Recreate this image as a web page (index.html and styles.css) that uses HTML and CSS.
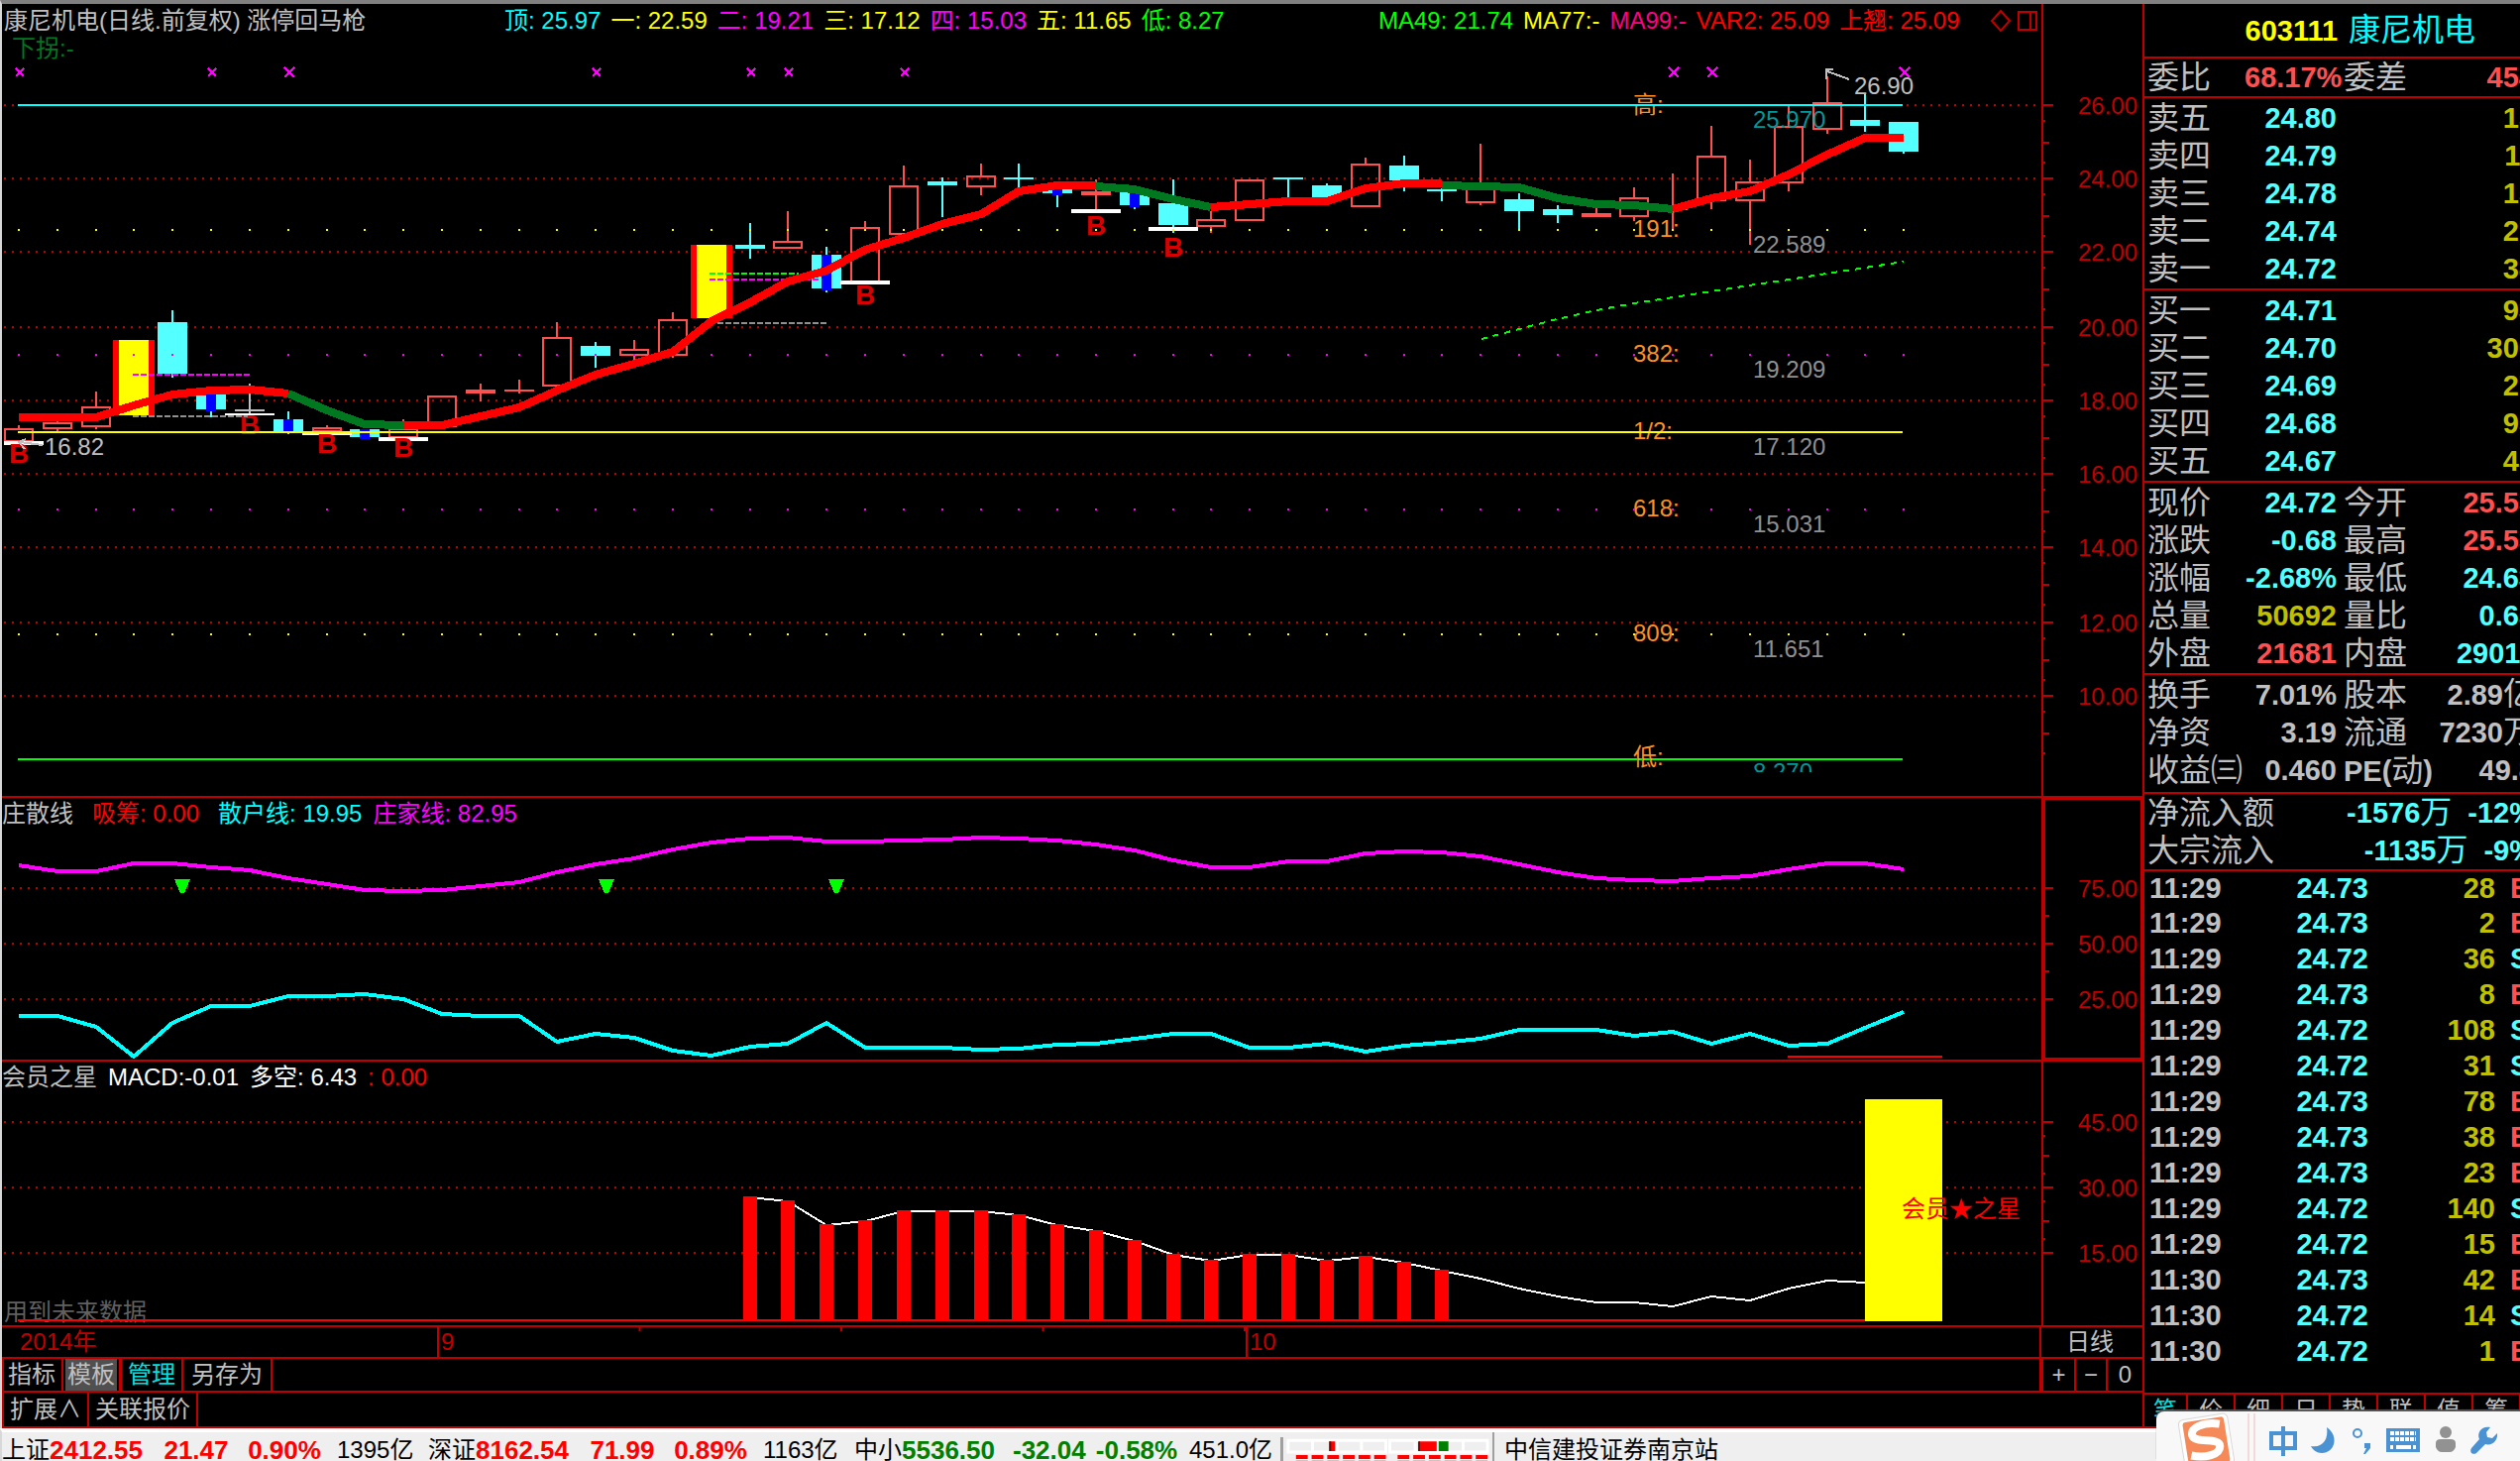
FILE: index.html
```html
<!DOCTYPE html>
<html lang="zh-CN">
<head>
<meta charset="utf-8">
<title>康尼机电 603111</title>
<link rel="stylesheet" href="styles.css">
</head>
<body>
<div class="app">
  <div class="workspace">
    <main class="charts">
      <section class="panel">
        <svg id="price" class="plot" viewBox="2 4 2160 799" preserveAspectRatio="xMinYMin meet"></svg>
        <header class="legend legend-main">
          <span>康尼机电(日线.前复权) 涨停回马枪</span>
          <div class="legend-group">
            <span class="aqua">顶: 25.97</span><span class="yellow">一: 22.59</span><span class="magenta">二: 19.21</span><span class="yellow">三: 17.12</span><span class="magenta">四: 15.03</span><span class="yellow">五: 11.65</span><span class="lime">低: 8.27</span>
          </div>
          <div class="legend-group">
            <span class="lime">MA49: 21.74</span><span class="yellow">MA77:-</span><span class="rose">MA99:-</span><span class="red">VAR2: 25.09</span><span class="red">上翘: 25.09</span>
          </div>
          <svg class="legend-icons" width="48" height="24" viewBox="0 0 48 24"><path d="M11 1 20 11 11 21 2 11ZM29 2H47V20H29ZM41 2V20" fill="none" stroke="#c00000" stroke-width="2"/></svg>
          <span class="turn">下拐:-</span>
        </header>
      </section>
      <section class="panel">
        <svg id="holders" class="plot" viewBox="2 805 2160 264" preserveAspectRatio="xMinYMin meet"></svg>
        <header class="legend legend-sub">
          <span class="wide-gap">庄散线</span><span class="red wide-gap">吸筹: 0.00</span><span class="aqua">散户线: 19.95</span><span class="magenta">庄家线: 82.95</span>
        </header>
      </section>
      <section class="panel">
        <svg id="star" class="plot" viewBox="2 1071 2160 266" preserveAspectRatio="xMinYMin meet"></svg>
        <header class="legend legend-sub">
          <span>会员之星</span><span class="white">MACD:-0.01</span><span class="white">多空: 6.43</span><span class="red">: 0.00</span>
        </header>
      </section>
      <div class="dates">
        <span class="date first">2014年</span><span class="date weeks">9</span><span class="date">10</span><span class="period">日线</span>
      </div>
      <nav class="tabs">
        <button>指标</button><button class="active">模板</button><button class="accent">管理</button><button class="roomy">另存为</button>
        <div class="zoom"><button>+</button><button>−</button><button>0</button></div>
      </nav>
      <nav class="tabs tabs-last">
        <button>扩展∧</button><button>关联报价</button>
      </nav>
    </main>

    <aside class="quote">
      <div class="quote-inner">
        <h1><span class="code">603111</span> 康尼机电</h1>
        <table class="block tight">
          <colgroup><col class="c1"><col class="c2"><col class="c3"><col></colgroup>
          <tr><th>委比</th><td class="up">68.17%</td><th>委差</th><td class="up">454</td></tr>
        </table>
        <table class="block">
          <colgroup><col class="c1"><col class="c2"><col></colgroup>
          <tr><th>卖五</th><td class="down">24.80</td><td class="vol">15</td></tr>
          <tr><th>卖四</th><td class="down">24.79</td><td class="vol">11</td></tr>
          <tr><th>卖三</th><td class="down">24.78</td><td class="vol">15</td></tr>
          <tr><th>卖二</th><td class="down">24.74</td><td class="vol">27</td></tr>
          <tr><th>卖一</th><td class="down">24.72</td><td class="vol">38</td></tr>
        </table>
        <table class="block">
          <colgroup><col class="c1"><col class="c2"><col></colgroup>
          <tr><th>买一</th><td class="down">24.71</td><td class="vol">93</td></tr>
          <tr><th>买二</th><td class="down">24.70</td><td class="vol">300</td></tr>
          <tr><th>买三</th><td class="down">24.69</td><td class="vol">27</td></tr>
          <tr><th>买四</th><td class="down">24.68</td><td class="vol">95</td></tr>
          <tr><th>买五</th><td class="down">24.67</td><td class="vol">45</td></tr>
        </table>
        <table class="block">
          <colgroup><col class="c1"><col class="c2"><col class="c3"><col></colgroup>
          <tr><th>现价</th><td class="down">24.72</td><th>今开</th><td class="up">25.53</td></tr>
          <tr><th>涨跌</th><td class="down">-0.68</td><th>最高</th><td class="up">25.53</td></tr>
          <tr><th>涨幅</th><td class="down">-2.68%</td><th>最低</th><td class="down">24.63</td></tr>
          <tr><th>总量</th><td class="vol">50692</td><th>量比</th><td class="down">0.65</td></tr>
          <tr><th>外盘</th><td class="up">21681</td><th>内盘</th><td class="down">29011</td></tr>
        </table>
        <table class="block loose">
          <colgroup><col class="c1"><col class="c2"><col class="c3"><col></colgroup>
          <tr><th>换手</th><td>7.01%</td><th>股本</th><td>2.89<span class="unit">亿</span></td></tr>
          <tr><th>净资</th><td>3.19</td><th>流通</th><td>7230<span class="unit">万</span></td></tr>
          <tr><th>收益㈢</th><td>0.460</td><th><span class="num">PE(</span>动<span class="num">)</span></th><td>49.8</td></tr>
        </table>
        <table class="block tight flow">
          <tr><th>净流入额</th><td class="down">-1576<span class="unit">万</span><span class="share">-12%</span></td></tr>
          <tr><th>大宗流入</th><td class="down">-1135<span class="unit">万</span><span class="share">-9%</span></td></tr>
        </table>
        <table class="trades" id="trades"></table>
        <nav class="side-tabs">
          <button class="accent">笔</button><button>价</button><button>细</button><button>日</button><button>势</button><button>联</button><button>值</button><button>筹</button>
        </nav>
      </div>
    </aside>
  </div>

  <footer class="status">
    <div class="index"><span>上证</span><b>2412.55</b><b>21.47</b><b>0.90%</b><span>1395亿</span></div>
    <div class="index"><span>深证</span><b>8162.54</b><b>71.99</b><b>0.89%</b><span>1163亿</span></div>
    <div class="index fall"><span>中小</span><b>5536.50</b><b>-32.04</b><b>-0.58%</b><span>451.0亿</span></div>
    <svg class="meter" width="214" height="24" viewBox="0 0 214 24">
      <path d="M5 1H105V13H5ZM109 1H209V13H109ZM30 1V13M55 1V13M80 1V13M135 1V13M160 1V13M184 1V13" fill="none" stroke="#fff" stroke-width="3"/>
      <path fill="#f00" d="M47 2h6v10h-6zM139 2h18v10h-18z"/><path fill="#800000" d="M47 2h2v10h-2zM138 2h2v10h-2z"/><path fill="#008000" d="M159 2h10v10h-10z"/>
      <path d="M13 18H105M13 24H105M117 18H209M117 24H209" stroke="#f00" stroke-width="4" stroke-dasharray="12 4"/>
    </svg>
    <span class="station">中信建投证券南京站</span>
  </footer>

  <div class="ime">
    <svg width="367" height="50" viewBox="2176 1424 367 50">
      <g transform="rotate(-9 2226 1452)">
        <rect x="2201" y="1429" width="50" height="52" rx="5" fill="#fff" stroke="#d8d8d8"/>
        <rect x="2205" y="1432" width="42" height="46" rx="3" fill="#f58a58"/>
        <path d="M2242 1439C2226 1434 2212 1438 2213 1446C2214 1455 2240 1452 2239 1461C2238 1470 2222 1471 2209 1466" fill="none" stroke="#fff" stroke-width="8"/>
      </g>
      <path d="M2269 1426V1474M2275 1426V1474" stroke="#f3d9dc" stroke-width="2"/>
      <g fill="none" stroke="#4b92d3" stroke-width="4"><path d="M2292 1446H2316V1461H2292ZM2304 1439V1469"/><circle cx="2379" cy="1446" r="4" stroke-width="2"/></g>
      <path d="M2348 1440C2361 1449 2356 1466 2343 1466C2338 1466 2334 1463 2332 1459C2344 1461 2350 1452 2348 1440Z" fill="#4b92d3"/>
      <path d="M2386 1456H2392V1461L2387 1467H2385L2388 1461H2386Z" fill="#4b92d3"/>
      <path d="M2408 1441H2442V1465H2408Z" fill="#4b92d3"/>
      <path d="M2412 1446H2438M2412 1452H2438" stroke="#fff" stroke-width="4" stroke-dasharray="4 1"/><path d="M2412 1460H2415M2418 1460H2433M2435 1460H2438" stroke="#fff" stroke-width="4"/>
      <g fill="#929292"><circle cx="2468" cy="1445" r="6"/><path d="M2458 1456Q2458 1452 2463 1452H2473Q2478 1452 2478 1456V1460Q2476 1465 2472 1465H2464Q2460 1465 2458 1460Z"/></g>
      <path d="M2513 1440C2505 1438 2499 1445 2502 1452L2494 1461C2491 1466 2497 1469 2500 1465L2508 1457C2515 1459 2521 1453 2520 1446L2515 1451L2510 1450L2509 1445Z" fill="#4b92d3"/>
    </svg>
  </div>
</div>
<script src="charts.js"></script>
</body>
</html>
```
FILE: styles.css
```css
* { box-sizing: border-box; }
body {
  margin: 0;
  background: #000;
  color: #c0c0c0;
  font: 24px/28px "Liberation Sans", "Noto Sans CJK SC", sans-serif;
}
button {
  margin: 0;
  padding: 0;
  border: 0;
  background: none;
  color: inherit;
  font: inherit;
}
.aqua { color: #00ffff; }
.yellow { color: #ffff00; }
.magenta { color: #ff00ff; }
.lime { color: #00ff00; }
.rose { color: #ff0080; }
.red { color: #ff0000; }
.white { color: #ffffff; }

.app {
  position: relative;
  display: grid;
  grid-template-rows: minmax(0, 1fr) 33px;
  height: 100vh;
  overflow: hidden;
}
.workspace {
  display: grid;
  grid-template-columns: minmax(0, 1fr) 381px;
  min-height: 0;
  border-top: 4px solid #808080;
  border-left: 2px solid #d8d8d8;
}

/* chart column */
.charts {
  display: grid;
  grid-template-rows: minmax(0, 801fr) minmax(0, 266fr) minmax(0, 268fr) 32px 34px 36px;
}
.panel {
  position: relative;
  border-bottom: 2px solid #c00000;
}
.plot {
  position: absolute;
  inset: 0;
  display: block;
  width: 100%;
  height: 100%;
}
.legend {
  position: absolute;
  inset: 0 0 auto 0;
  white-space: nowrap;
}
.legend-main {
  display: grid;
  grid-template-columns: 505px 882px 1fr 48px;
  padding: 3px 106px 0 2px;
}
.legend-group { display: flex; gap: 10px; }
.legend-icons { margin-top: 3px; }
.turn { padding-left: 8px; color: #007820; }
.legend-sub { display: flex; gap: 11px; padding-top: 2px; }
.wide-gap { margin-right: 8px; }

.dates {
  display: grid;
  grid-template-columns: 441fr 816fr 801fr 102px;
  border-bottom: 2px solid #c00000;
  color: #c00000;
  line-height: 30px;
}
.date { padding-left: 2px; border-right: 2px solid #c00000; }
.first { padding-left: 18px; }
.weeks {
  background: linear-gradient(to left, #c00000 2px, transparent 2px) 0 0 / 25% 4px repeat-x;
}
.period { color: #c0c0c0; text-align: center; padding-right: 4px; }

.tabs {
  display: flex;
  border-left: 2px solid #c00000;
  border-bottom: 2px solid #c00000;
}
.tabs > button { padding: 0 6px 0 4px; border-right: 2px solid #c00000; }
.tabs > .active { padding: 0 2px; border: 2px solid #000; border-width: 0 2px; background: #505050; }
.tabs > .accent { padding: 0 6px; border-left: 3px solid #c00000; }
.tabs > .roomy { padding: 0 8px; }
.tabs-last > button { padding: 0 6px; }
.accent { color: #00e0e0; }
.zoom {
  display: grid;
  grid-template-columns: 31px 32px 37px;
  margin-left: auto;
  border-left: 4px solid #c00000;
}
.zoom button + button { border-left: 2px solid #c00000; }

/* quote column */
.quote {
  overflow: hidden;
  border-left: 2px solid #c00000;
  border-bottom: 2px solid #c00000;
}
.quote-inner {
  display: flex;
  flex-direction: column;
  width: 394px;
  height: 100%;
}
h1 {
  margin: 0;
  height: 53px;
  padding: 0 60px 0 0;
  color: #00ffff;
  font-size: 32px;
  font-weight: 400;
  line-height: 53px;
  text-align: right;
}
.code { margin-right: 2px; color: #ffff00; font-size: 29px; font-weight: 700; }
table { width: 100%; table-layout: fixed; border-collapse: collapse; }
.block {
  display: block;
  padding: 1px 0 1px 3px;
  border-top: 2px solid #c00000;
}
.tight { padding: 0 0 0 3px; }
.loose { padding-bottom: 3px; }
.block tbody { display: block; }
.block colgroup { display: none; }
.block tr { display: grid; grid-template-columns: 98px 93px 99px 101px; }
.block tr:has(.vol:last-child) { grid-template-columns: 98px 93px 200px; }
.flow tr { grid-template-columns: 140px 251px; }
th, td { height: 38px; padding: 0; white-space: nowrap; line-height: 38px; }
th { font-size: 32px; font-weight: 400; text-align: left; }
td + th { padding-left: 7px; }
td, .num { font-size: 29px; font-weight: 700; text-align: right; }
.unit { font-size: 32px; font-weight: 400; line-height: 32px; }
.share { margin-left: 16px; }
.up { color: #ff5050; }
.down { color: #54ffff; }
.vol { color: #c0c000; }
.flow td { padding-right: 0; }
.trades { border-top: 2px solid #c00000; }
.trades td { height: 36px; line-height: 34px; vertical-align: top; }
.trades td:first-child { width: 100px; padding-left: 5px; text-align: left; }
.trades td:nth-child(2) { width: 126px; }
.trades td:nth-child(3) { width: 128px; }
.trades td:nth-child(4) { text-align: left; padding-left: 15px; }
.side-tabs {
  display: grid;
  grid-template-columns: 44px repeat(7, 48px);
  height: 34px;
  margin-top: auto;
  border-top: 2px solid #c00000;
  overflow: hidden;
}
.side-tabs button { border-right: 2px solid #c00000; white-space: nowrap; }

/* status bar */
.status {
  display: flex;
  overflow: hidden;
  border-top: 4px solid #fff;
  border-left: 2px solid #d8d8d8;
  background: #efefef;
  color: #000;
  line-height: 36px;
  white-space: nowrap;
}
.index { display: grid; grid-template-columns: 48px 112px 72px 106px 92px; height: 36px; }
.index b { color: #ff0000; font-size: 26px; text-align: center; }
.index b:nth-child(2) { text-align: left; }
.index.fall b { color: #008000; }
.meter { flex: none; margin: 5px 0; border-left: 3px solid #a0a0a0; height: 28px; }
.station { padding-left: 10px; border-left: 2px solid #a0a0a0; }

/* floating input-method bar */
.ime {
  position: absolute;
  right: 0;
  bottom: 0;
  height: 50px;
  border-radius: 8px 0 0 0;
  background: #f8f8f8;
  box-shadow: 0 -2px 1px #555;
}
.ime svg { display: block; }

/* plot parts */
.plot { shape-rendering: crispEdges; }
.plot text { font-size: 24px; }
.plot .mark { font-size: 28px; font-weight: 700; fill: #d80000; text-anchor: middle; }
.plot .scale { fill: #c00000; text-anchor: end; }
```
FILE: charts.js
```js
const X = i => Math.round(19 + 38.82 * i);
const rect = (x, y, w, h, c) => `<rect x="${x}" y="${y}" width="${w}" height="${h}" fill="${c}"/>`;
const hline = (y, x1, x2, c, dash) =>
  `<path d="M${x1} ${y}H${x2}" stroke="${c}" stroke-width="2" ${dash ? `stroke-dasharray="${dash}"` : ''}/>`;
const poly = (from, ys, c, w) =>
  `<polyline points="${ys.map((y, k) => X(from + k) + ',' + y).join(' ')}" fill="none" stroke="${c}" stroke-width="${w}" stroke-linejoin="round"/>`;
const text = (x, y, s, c, cls) => `<text x="${x}" y="${y}" ${c ? `fill="${c}"` : ''} class="${cls || ''}">${s}</text>`;
const RED = '#c00000', UP = '#ff5050', DOWN = '#54ffff';

function axis(levels, mids, smalls, top, bottom) {
  let s = rect(2060, top, 2, bottom - top, RED);
  for (const [y, label] of levels) {
    s += hline(y, 4, 2056, RED, '2 6') + rect(2062, y - 1, 10, 2, RED) + text(2157, y + 9, label, '', 'scale');
  }
  for (const y of mids) s += rect(2062, y - 1, 6, 2, RED);
  for (const y of smalls) s += rect(2062, y - 1, 2, 2, RED);
  return s;
}

/* kind, high, body top, body bottom, low  (h hollow, r solid red, c cyan, b cyan with blue core, y limit-up, g grey) */
const candles = [
  'h 429 432 446 446', 'h 424 426 433 435', 'h 395 410 431 433', 'y 343 343 419 419', 'c 313 325 377 381',
  'b 396 396 413 421', 'g 387 413 415 419', 'b 415 423 435 438', 'h 429 431 436 436', 'b 433 433 441 443',
  'h 423 432 442 442', 'h 399 399 431 431', 'r 387 393 397 405', 'r 383 393 395 397', 'h 325 340 390 390',
  'c 345 349 359 371', 'h 343 352 359 363', 'h 315 322 359 361', 'y 247 247 321 321', 'c 225 247 251 261',
  'h 213 243 251 251', 'b 249 257 291 295', 'h 223 229 285 285', 'h 167 187 237 237', 'c 179 183 187 219',
  'h 165 177 189 197', 'c 165 179 181 190', 'b 185 189 195 209', 'r 181 193 197 211', 'b 194 194 207 211',
  'c 181 205 227 235', 'h 213 221 229 235', 'h 181 181 223 223', 'c 179 179 181 200', 'c 185 187 200 200',
  'h 159 165 209 209', 'c 157 167 182 193', 'c 190 191 193 203', 'h 145 187 205 207', 'c 195 201 213 231',
  'c 207 211 217 225', 'r 209 215 219 219', 'h 189 199 219 223', 'r 175 210 212 231', 'h 127 157 203 211',
  'h 161 183 203 247', 'h 107 127 185 193', 'h 77 103 131 135', 'c 95 121 127 133', 'c 123 123 153 155'
];

function candle(row, i) {
  const [kind, ...v] = row.split(' ');
  const [hi, top, bot, lo] = v.map(Number);
  const x = X(i);
  if (kind === 'y') return rect(x - 21, top, 42, bot - top, '#ff0000') + rect(x - 15, top, 30, bot - top, '#ffff00');
  const c = { h: UP, r: UP, c: DOWN, b: DOWN, g: '#c0c0c0' }[kind];
  let s = rect(x - 1, hi, 2, top - hi, c) + rect(x - 1, bot, 2, lo - bot, c);
  if (kind === 'h') s += `<rect x="${x - 14}" y="${top + 1}" width="28" height="${bot - top - 2}" fill="none" stroke="${c}" stroke-width="2"/>`;
  else s += rect(x - 15, top, 30, bot - top, c);
  if (kind === 'b') s += rect(x - 5, top, 10, bot - top + 2, '#0000ff');
  return s;
}

/* price panel */
{
  const levels = [106, 180, 254, 330, 404, 478, 552, 628, 702].map((y, k) => [y, (26 - 2 * k) + '.00']);
  let s = axis(levels, levels.map(l => l[0] + 38), levels.flatMap(l => [l[0] + 16, l[0] + 58]), 4, 803);
  s += candles.map(candle).join('');
  for (const [i, y, h] of [[0, 445, 4], [6, 417, 2], [8, 437, 2], [10, 441, 4], [22, 283, 4], [28, 211, 4], [30, 229, 4]]) {
    const l = Math.max(X(i) - 25, 4);
    s += rect(l, y, X(i) + 25 - l, h, '#ffffff');
  }
  for (const [i, y] of [[0, 467], [6, 438], [8, 457], [10, 461], [22, 307], [28, 237], [30, 259]]) s += text(X(i), y, 'B', '', 'mark');
  s += hline(378, 134, 252, '#ff00ff', '6 2') + hline(420, 134, 250, '#909090', '6 2');
  s += hline(276, 716, 806, '#00ff00', '6 2') + hline(282, 716, 826, '#ff00ff', '6 2') + hline(326, 716, 834, '#909090', '6 2');
  s += text(1648, 114, '高:', '#ff9020') + text(1648, 239, '191:', '#ff9020') + text(1648, 365, '382:', '#ff9020')
    + text(1648, 443, '1/2:', '#ff9020') + text(1648, 521, '618:', '#ff9020') + text(1648, 647, '809:', '#ff9020');
  s += text(1769, 129, '25.970', '#009898') + text(1769, 255, '22.589', '#909090') + text(1769, 381, '19.209', '#909090')
    + text(1769, 459, '17.120', '#909090') + text(1769, 537, '15.031', '#909090') + text(1769, 663, '11.651', '#909090');
  s += '<clipPath id="cut"><rect x="1760" y="760" width="90" height="19"/></clipPath><g clip-path="url(#cut)">' + text(1769, 787, '8.270', '#009898') + '</g>';
  s += hline(106, 18, 1920, '#00ffff') + hline(436, 18, 1920, '#ffff00') + hline(766, 18, 1920, '#00ff00');
  s += text(1648, 772, '低:', '#ff9020');
  for (let i = 0; i < 50; i++) {
    s += rect(X(i) - 1, 231, 2, 2, '#ffff00') + rect(X(i) - 1, 639, 2, 2, '#ffff00');
    s += rect(X(i) - 1, 357, 2, 2, '#ff00ff') + rect(X(i) - 1, 513, 2, 2, '#ff00ff');
  }
  s += '<polyline points="1495,342 1571,322 1611,313 1649,306 1727,294 1765,288 1805,282 1921,264" fill="none" stroke="#00ff00" stroke-width="2" stroke-dasharray="6 6"/>';
  s += poly(0, [421, 421, 421, 409, 398, 394, 393, 397], '#ff0000', 8) + poly(7, [397, 414, 428, 429], '#007820', 8);
  s += poly(10, [429, 429, 420, 411, 394, 378, 367, 355, 324, 305, 284, 273, 252, 240, 226, 216, 193, 187, 187], '#ff0000', 8);
  s += poly(28, [188, 191, 201, 209], '#007820', 8) + poly(31, [209, 206, 203, 203, 190, 185, 185], '#ff0000', 8);
  s += poly(37, [187, 188, 189, 200, 206, 207, 211], '#007820', 8) + poly(43, [211, 200, 193, 176, 156, 139, 139], '#ff0000', 8);
  for (const i of [0, 5, 7, 15, 19, 20, 23, 43, 44, 49]) {
    const r = [7, 43, 44, 49].includes(i) ? 5 : 4;
    s += `<path d="M${X(i) - r + 1} ${73 - r}l${2 * r} ${2 * r}m0 ${-2 * r}l${-2 * r} ${2 * r}" stroke="#ff00ff" stroke-width="2"/>`;
  }
  s += text(1871, 95, '26.90', '#c0c0c0') + text(45, 459, '16.82', '#c0c0c0');
  s += '<path d="M1866 80L1844 72M1850 70H1843V80M43 449L20 446M26 443L19 446L25 453" fill="none" stroke="#c0c0c0" stroke-width="2"/>';
  document.getElementById('price').innerHTML = s;
}

/* holders panel */
{
  let s = axis([[896, '75.00'], [952, '50.00'], [1008, '25.00']], [924, 980], [], 805, 1069);
  s += rect(2060, 805, 4, 264, RED) + rect(2060, 805, 102, 2, RED) + rect(2160, 805, 2, 264, RED) + rect(2060, 1067, 102, 2, RED);
  s += poly(0, [873, 879, 879, 871, 871, 875, 878, 886, 892, 898, 899, 898, 894, 890, 880, 872, 866, 857, 850, 846, 845, 849, 849, 848, 847, 845, 846, 848, 852, 858, 868, 875, 875, 869, 869, 861, 859, 860, 864, 872, 880, 886, 888, 889, 886, 884, 877, 871, 871, 877], '#ff00ff', 4);
  s += poly(0, [1025, 1025, 1036, 1066, 1032, 1015, 1015, 1005, 1005, 1003, 1008, 1023, 1025, 1025, 1051, 1043, 1047, 1060, 1065, 1056, 1053, 1032, 1057, 1057, 1057, 1059, 1058, 1054, 1053, 1048, 1043, 1043, 1057, 1057, 1053, 1061, 1055, 1052, 1048, 1039, 1039, 1039, 1045, 1041, 1053, 1043, 1055, 1053, 1037, 1021], '#00ffff', 4);
  s += rect(1804, 1065, 156, 2, '#ff0000');
  for (const x of [184, 612, 844]) s += `<path d="M${x - 8} 887h16l-6 14h-4z" fill="#00ff00"/>`;
  document.getElementById('holders').innerHTML = s;
}

/* star panel */
{
  let s = axis([[1132, '45.00'], [1198, '30.00'], [1264, '15.00']], [1166, 1232], [1146, 1184, 1212, 1250], 1071, 1337);
  const tops = [1207, 1211, 1235, 1231, 1221, 1221, 1221, 1225, 1235, 1241, 1251, 1265, 1271, 1265, 1265, 1271, 1267, 1273, 1281];
  s += text(4, 1332, '用到未来数据', '#606060');
  s += poly(19, [...tops.map(y => y + 1), 1290, 1300, 1308, 1314, 1314, 1318, 1308, 1312, 1300, 1292, 1294], '#ffffff', 2);
  s += tops.map((y, k) => rect(X(19 + k) - 7, y, 14, 1332 - y, '#ff0000')).join('');
  s += rect(18, 1331, 1864, 2, '#ff0000') + rect(1882, 1109, 78, 224, '#ffff00') + text(1919, 1228, '会员★之星', '#ff0000');
  document.getElementById('star').innerHTML = s;
}

/* trades list */
document.getElementById('trades').innerHTML = [
  '11:29 24.73 28 B', '11:29 24.73 2 B', '11:29 24.72 36 S', '11:29 24.73 8 B', '11:29 24.72 108 S', '11:29 24.72 31 S', '11:29 24.73 78 B',
  '11:29 24.73 38 B', '11:29 24.73 23 B', '11:29 24.72 140 S', '11:29 24.72 15 B', '11:30 24.73 42 B', '11:30 24.72 14 S', '11:30 24.72 1 B'
].map(row => {
  const [t, p, v, side] = row.split(' ');
  return `<tr><td>${t}</td><td class="down">${p}</td><td class="vol">${v}</td><td class="${side === 'B' ? 'up' : 'down'}">${side}</td></tr>`;
}).join('');
```
